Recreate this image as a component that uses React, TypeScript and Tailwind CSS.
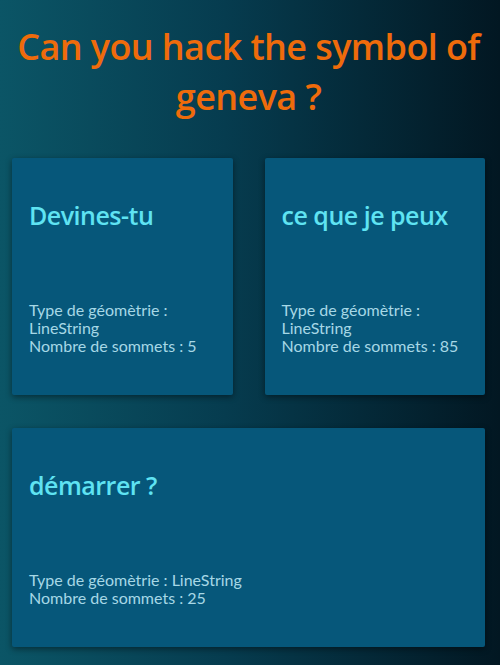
import React from 'react';

const cards = [
  { title: 'Devines-tu', type: 'LineString', count: 5, wide: false },
  { title: 'ce que je peux', type: 'LineString', count: 85, wide: false },
  { title: 'démarrer ?', type: 'LineString', count: 25, wide: true },
];

function Card({ title, type, count, wide }: { title: string; type: string; count: number; wide: boolean }) {
  return (
    <div
      className={`${wide ? 'col-span-2 h-[219px]' : 'h-[237px]'} bg-[#06577a] rounded-[2px] shadow-[0_2px_6px_rgba(0,0,0,0.45)] px-[17px] flex flex-col`}
    >
      <h2 className="mt-[40px] font-['Open_Sans',sans-serif] font-semibold text-[25px] leading-[34px] tracking-[-0.5px] text-[#5fe3f2]">
        {title}
      </h2>
      <div className="mt-auto mb-[40px] font-['Lato',sans-serif] text-[16px] leading-[18px] text-[#a6d8e6]">
        <div>Type de géomètrie : {type}</div>
        <div>Nombre de sommets : {count}</div>
      </div>
    </div>
  );
}

export default function App() {
  return (
    <div className="min-h-[665px] w-[500px] bg-[linear-gradient(90deg,#0b5566_0%,#063c4f_45%,#021722_100%)] pt-[22px] pl-[12px] pr-[15px] pb-[18px]">
      <h1 className="text-center font-['Open_Sans',sans-serif] font-semibold text-[36px] leading-[50px] tracking-[-0.6px] text-[#ef6b0b]">
        Can you hack the symbol of geneva ?
      </h1>
      <div className="mt-[36px] grid grid-cols-2 gap-x-[32px] gap-y-[33px]">
        {cards.map((c) => (
          <Card key={c.title} {...c} />
        ))}
      </div>
    </div>
  );
}
